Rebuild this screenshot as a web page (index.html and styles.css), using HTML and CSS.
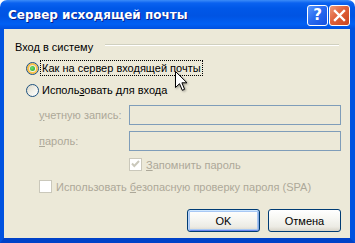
FILE: index.html
```html
<!DOCTYPE html>
<html lang="ru">
<head>
<meta charset="utf-8">
<title>Сервер исходящей почты</title>
<link rel="stylesheet" href="styles.css">
</head>
<body>
<div class="window">
  <div class="titlebar">
    <span class="title">Сервер исходящей почты</span>
    <div class="tbuttons">
      <div class="tbtn help">?</div>
      <div class="tbtn close">
        <svg width="13" height="13" viewBox="0 0 13 13"><path d="M2 2 L11 11 M11 2 L2 11" stroke="#fff" stroke-width="2.4" stroke-linecap="square"/></svg>
      </div>
    </div>
  </div>
  <div class="client">
    <div class="group-head">
      <span>Вход в систему</span>
      <span class="line"></span>
    </div>
    <div class="radio-row first">
      <span class="radio checked hover"></span>
      <span class="focus">Как на сервер входящей почты</span>
    </div>
    <div class="radio-row second">
      <span class="radio"></span>
      <span class="rlabel">Исполь<u>з</u>овать для входа</span>
    </div>
    <div class="form">
      <span class="flabel"><u>у</u>четную запись:</span>
      <span class="field"></span>
      <span class="flabel"><u>п</u>ароль:</span>
      <span class="field"></span>
    </div>
    <div class="check-row remember">
      <span class="check">
        <svg width="11" height="11" viewBox="0 0 11 11"><path d="M2 4.5 L4.3 7 L9 2" fill="none" stroke="#cac8bb" stroke-width="2"/></svg>
      </span>
      <span class="dlabel"><u>З</u>апомнить пароль</span>
    </div>
    <div class="check-row spa">
      <span class="check"></span>
      <span class="dlabel">Использовать <u>б</u>езопасную проверку пароля (SPA)</span>
    </div>
    <div class="buttons">
      <div class="btn default">OK</div>
      <div class="btn">Отмена</div>
    </div>
  </div>
  <svg class="cursor" width="14" height="22" viewBox="0 0 14 22"><path d="M0.5 0.5 L0.5 16.5 L4.5 12.7 L7.3 19.3 L9.6 18.3 L6.9 11.8 L12 11.8 Z" fill="#fff" stroke="#000" stroke-width="1"/></svg>
</div>
</body>
</html>
```
FILE: styles.css
```css
html, body {
  margin: 0;
  padding: 0;
  background: #fff;
}
.window {
  position: relative;
  width: 355px;
  height: 243px;
  display: flex;
  flex-direction: column;
  font-family: "Liberation Sans", Arial, sans-serif;
  font-size: 11px;
  color: #000;
}
.titlebar {
  height: 29px;
  flex: none;
  border-radius: 7px 7px 0 0;
  background: linear-gradient(to bottom, #3c8cf8 0px, #0a62f0 3px, #0058e8 8px, #0054e3 16px, #0060f4 24px, #0050e0 29px);
  display: flex;
  align-items: center;
  justify-content: space-between;
  padding: 0 5px 0 8px;
  box-sizing: border-box;
}
.title {
  color: #fff;
  font-family: "DejaVu Sans", sans-serif;
  font-weight: bold;
  font-size: 12px;
  text-shadow: 1px 1px 0 #0a1e8a;
  margin-top: 1px;
}
.tbuttons {
  display: flex;
  gap: 1px;
  margin-top: 2px;
}
.tbtn {
  width: 21px;
  height: 21px;
  box-sizing: border-box;
  border: 1px solid #fff;
  border-radius: 3px;
  display: flex;
  align-items: center;
  justify-content: center;
}
.help {
  background: linear-gradient(135deg, #5a98ff 0%, #2a6cf0 45%, #1550e0 100%);
  color: #fff;
  font-family: "DejaVu Sans", sans-serif;
  font-weight: bold;
  font-size: 15px;
  line-height: 1;
}
.close {
  background: linear-gradient(135deg, #ef9a7a 0%, #e0613a 45%, #c9441e 100%);
}
.client {
  flex: 1;
  background: #ece9d8;
  border-left: 4px solid #0052e0;
  border-right: 5px solid #0052e0;
  border-bottom: 5px solid #0042c8;
  padding: 11px 9px 0 11px;
  display: flex;
  flex-direction: column;
}
.group-head {
  display: flex;
  align-items: center;
  gap: 12px;
  height: 13px;
  color: #000;
}
.group-head .line {
  flex: 1;
  height: 0;
  border-top: 1px solid #d0d0bf;
  border-bottom: 1px solid #fff;
  margin-right: 2px;
  margin-top: -3px;
}
.radio-row {
  display: flex;
  align-items: center;
  height: 16px;
  padding-left: 11px;
}
.radio-row.first { margin-top: 7px; }
.radio-row.second { margin-top: 6px; }
.radio {
  width: 13px;
  height: 13px;
  box-sizing: border-box;
  border-radius: 50%;
  border: 1px solid #1c5180;
  background: linear-gradient(135deg, #dcd8c6 0%, #f2f1ea 55%, #fff 100%);
  position: relative;
  flex: none;
}
.radio.hover {
  box-shadow: inset 0 0 0 2px #f9c04a;
}
.radio.checked::after {
  content: "";
  position: absolute;
  left: 3px;
  top: 3px;
  width: 5px;
  height: 5px;
  border-radius: 50%;
  background: radial-gradient(circle at 40% 40%, #6fe06f, #21a121);
}
.focus {
  margin-left: 2px;
  padding: 0 1px;
  outline: 1px dotted #000;
  outline-offset: 0;
  line-height: 14px;
}
.rlabel {
  margin-left: 3px;
}
.form {
  display: grid;
  grid-template-columns: 90px 212px;
  row-gap: 6px;
  margin-top: 7px;
  margin-left: 24px;
  align-items: center;
}
.flabel {
  color: #aca899;
}
.field {
  height: 20px;
  box-sizing: border-box;
  border: 1px solid #7f9db9;
  background: #ece9d8;
}
.check-row {
  display: flex;
  align-items: center;
  height: 13px;
}
.check-row.remember {
  margin-top: 7px;
  margin-left: 114px;
}
.check-row.spa {
  margin-top: 9px;
  margin-left: 24px;
}
.check {
  width: 13px;
  height: 13px;
  box-sizing: border-box;
  border: 1px solid #cac8bb;
  background: #fff;
  display: flex;
  align-items: center;
  justify-content: center;
  flex: none;
}
.dlabel {
  color: #aca899;
  margin-left: 4px;
}
.buttons {
  display: flex;
  justify-content: flex-end;
  gap: 8px;
  margin-top: 16px;
}
.btn {
  width: 73px;
  height: 23px;
  box-sizing: border-box;
  border: 1px solid #003c74;
  border-radius: 3px;
  background: linear-gradient(to bottom, #ffffff 0%, #f7f7f3 40%, #ecebe4 80%, #d8d4c8 100%);
  display: flex;
  align-items: center;
  justify-content: center;
}
.btn.default {
  box-shadow: inset 0 1px 0 #cee7ff, inset 1px 0 0 #bcd4f6, inset -1px 0 0 #89ade4, inset 0 -1px 0 #6982ee, inset 0 0 0 2px #a8c8f4;
}
.cursor {
  position: absolute;
  left: 175px;
  top: 71px;
  filter: drop-shadow(1px 1px 1px rgba(0,0,0,0.35));
}
```
